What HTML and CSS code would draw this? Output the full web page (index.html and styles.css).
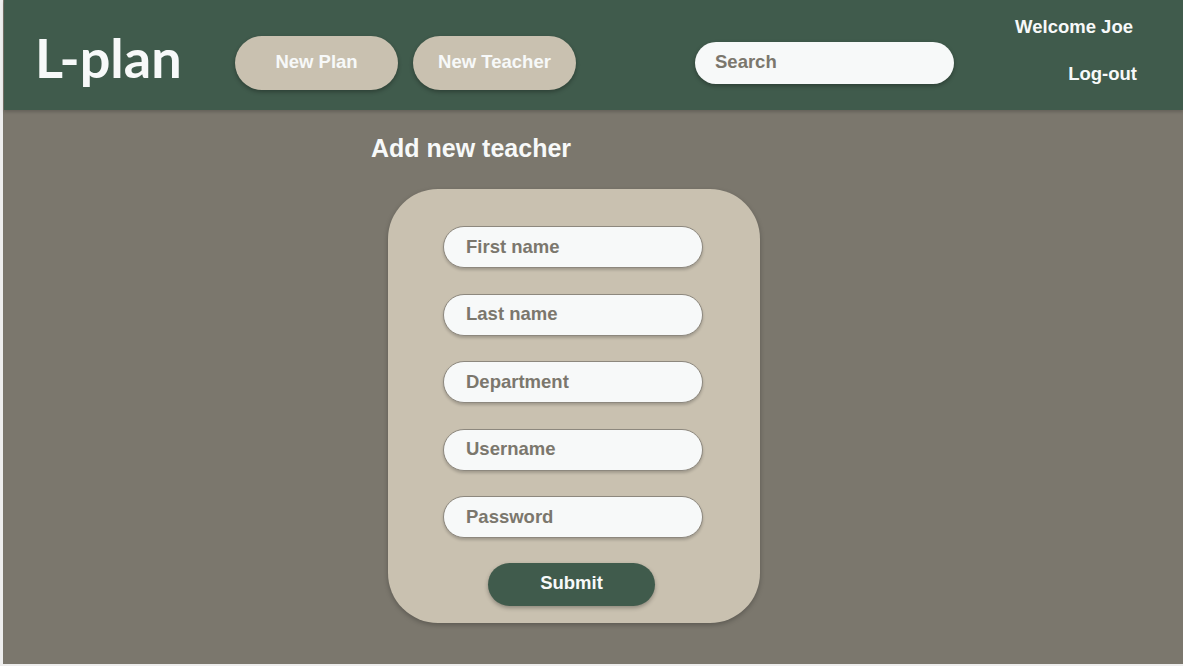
FILE: index.html
```html
<!DOCTYPE html>
<html lang="en">
<head>
<meta charset="utf-8">
<title>L-plan – Add new teacher</title>
<link rel="stylesheet" href="styles.css">
</head>
<body>
<div class="page">
  <header class="topbar">
    <div class="logo">L-plan</div>
    <nav class="nav">
      <button class="pill-btn">New Plan</button>
      <button class="pill-btn">New Teacher</button>
    </nav>
    <input class="search" type="text" placeholder="Search">
    <div class="user">
      <span class="welcome">Welcome Joe</span>
      <a class="logout" href="#">Log-out</a>
    </div>
  </header>
  <main class="main">
    <h1 class="title">Add new teacher</h1>
    <form class="card">
      <input class="field" type="text" placeholder="First name">
      <input class="field" type="text" placeholder="Last name">
      <input class="field" type="text" placeholder="Department">
      <input class="field" type="text" placeholder="Username">
      <input class="field" type="password" placeholder="Password">
      <button class="submit" type="button">Submit</button>
    </form>
  </main>
</div>
</body>
</html>
```

FILE: styles.css
```css
* { box-sizing: border-box; }

html, body {
  margin: 0;
  padding: 0;
  background: #eeeeee;
}

body {
  font-family: "Liberation Sans", Arial, sans-serif;
  width: 1183px;
  height: 666px;
  overflow: hidden;
}

.page {
  margin-left: 3px;
  height: 664px;
  background: #7b776d;
  display: flex;
  flex-direction: column;
}

.topbar {
  height: 110px;
  margin-left: 1px;
  background: #405b4c;
  display: flex;
  align-items: flex-start;
  padding: 0 46px 0 31px;
  box-shadow: 0 2px 3px rgba(0, 0, 0, 0.18);
  position: relative;
  z-index: 1;
}

.logo {
  width: 146px;
  font-family: Lato, "Liberation Sans", sans-serif;
  font-weight: 700;
  font-size: 54px;
  line-height: 54px;
  color: #f7f9f9;
  margin-top: 31px;
  white-space: nowrap;
}

.nav {
  display: flex;
  gap: 15px;
  margin-top: 36px;
  margin-left: 54px;
}

.pill-btn {
  width: 163px;
  height: 54px;
  border: none;
  border-radius: 27px;
  background: #c9c1b0;
  color: #f7f9f9;
  font-family: "Liberation Sans", Arial, sans-serif;
  font-weight: 700;
  font-size: 18.5px;
  box-shadow: 0 2px 4px rgba(0, 0, 0, 0.3);
  padding: 0 0 2px;
}

.search {
  width: 259px;
  height: 42px;
  margin-top: 42px;
  margin-left: 119px;
  border: none;
  border-radius: 21px;
  background: #f7f9f9;
  padding: 0 0 2px 20px;
  font-family: "Liberation Sans", Arial, sans-serif;
  font-weight: 700;
  font-size: 18.5px;
  color: #7b776d;
  box-shadow: 0 2px 4px rgba(0, 0, 0, 0.3);
  outline: none;
}

.search::placeholder { color: #7b776d; }

.user {
  margin-left: auto;
  margin-top: 16px;
  display: flex;
  flex-direction: column;
  align-items: flex-end;
  gap: 25px;
}

.welcome, .logout {
  font-weight: 700;
  font-size: 18.5px;
  line-height: 22px;
  color: #f7f9f9;
  text-decoration: none;
}

.welcome { margin-right: 4px; }

.main {
  flex: 1;
  padding: 23px 0 0 368px;
  display: flex;
  flex-direction: column;
  align-items: flex-start;
}

.title {
  margin: 0;
  font-family: "Liberation Sans", Arial, sans-serif;
  font-weight: 700;
  font-size: 25px;
  line-height: 30px;
  color: #f7f9f9;
}

.card {
  margin: 26px 0 0 17px;
  width: 372px;
  height: 434px;
  background: #c9c1b0;
  border-radius: 50px;
  padding: 37px 57px 17px 55px;
  display: flex;
  flex-direction: column;
  gap: 25.5px;
  box-shadow: 0 2px 5px rgba(0, 0, 0, 0.25);
}

.field {
  width: 260px;
  height: 42px;
  border: 1px solid #8d887e;
  border-radius: 21px;
  background: #f7f9f9;
  padding: 0 0 1px 22px;
  font-family: "Liberation Sans", Arial, sans-serif;
  font-weight: 700;
  font-size: 18.5px;
  color: #7b776d;
  box-shadow: 0 2px 3px rgba(0, 0, 0, 0.2);
  outline: none;
}

.field::placeholder { color: #7b776d; }

.submit {
  align-self: center;
  width: 167px;
  height: 43px;
  margin-top: -0.5px;
  margin-left: -3px;
  border: none;
  border-radius: 22px;
  background: #405b4c;
  color: #f7f9f9;
  font-family: "Liberation Sans", Arial, sans-serif;
  font-weight: 700;
  font-size: 18.5px;
  padding: 0 0 4px;
  box-shadow: 0 2px 4px rgba(0, 0, 0, 0.3);
}
```
